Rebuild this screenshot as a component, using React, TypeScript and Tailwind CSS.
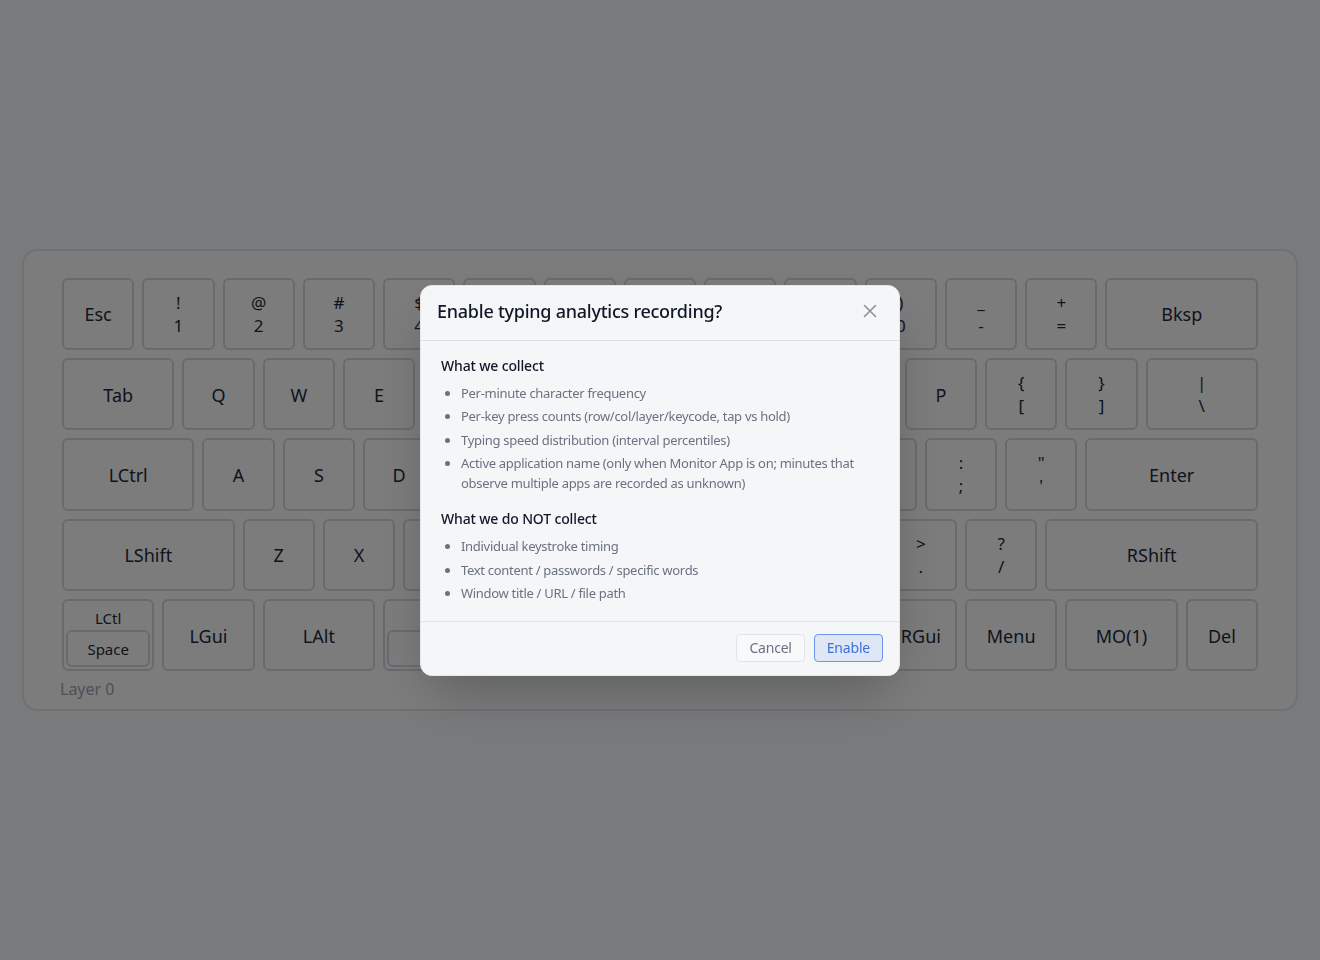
import React from 'react';

type Key = { u?: number; label?: string; top?: string; bottom?: string; hold?: string; tap?: string };

const PITCH = 80.27;
const GAP = 8;

const rows: Key[][] = [
  [
    { label: 'Esc' },
    { top: '!', bottom: '1' },
    { top: '@', bottom: '2' },
    { top: '#', bottom: '3' },
    { top: '$', bottom: '4' },
    { top: '%', bottom: '5' },
    { top: '^', bottom: '6' },
    { top: '&', bottom: '7' },
    { top: '*', bottom: '8' },
    { top: '(', bottom: '9' },
    { top: ')', bottom: '0' },
    { top: '_', bottom: '-' },
    { top: '+', bottom: '=' },
    { label: 'Bksp', u: 2 },
  ],
  [
    { label: 'Tab', u: 1.5 },
    ...'QWERTYUIOP'.split('').map((c) => ({ label: c })),
    { top: '{', bottom: '[' },
    { top: '}', bottom: ']' },
    { top: '|', bottom: '\\', u: 1.5 },
  ],
  [
    { label: 'LCtrl', u: 1.75 },
    ...'ASDFGHJKL'.split('').map((c) => ({ label: c })),
    { top: ':', bottom: ';' },
    { top: '"', bottom: "'" },
    { label: 'Enter', u: 2.25 },
  ],
  [
    { label: 'LShift', u: 2.25 },
    ...'ZXCVBNM'.split('').map((c) => ({ label: c })),
    { top: '<', bottom: ',' },
    { top: '>', bottom: '.' },
    { top: '?', bottom: '/' },
    { label: 'RShift', u: 2.75 },
  ],
  [
    { hold: 'LCtl', tap: 'Space', u: 1.25 },
    { label: 'LGui', u: 1.25 },
    { label: 'LAlt', u: 1.5 },
    { hold: 'MO(2)', tap: 'Space', u: 6.25 },
    { label: 'RGui' },
    { label: 'Menu', u: 1.25 },
    { label: 'MO(1)', u: 1.5 },
    { label: 'Del' },
  ],
];

function KeyCap({ k }: { k: Key }) {
  const width = (k.u ?? 1) * PITCH - GAP;
  if (k.hold) {
    return (
      <div
        style={{ width }}
        className="h-[72.27px] shrink-0 rounded-md border-2 border-[#d1d5db] flex flex-col items-center p-[2px]"
      >
        <div className="flex-1 flex items-center text-[15px] leading-5 text-gray-800 pt-[3px]">{k.hold}</div>
        <div className="w-full h-[37px] rounded-md border-2 border-[#d1d5db] flex items-center justify-center text-[15px] text-gray-800 pt-[1px]">
          {k.tap}
        </div>
      </div>
    );
  }
  return (
    <div
      style={{ width }}
      className="h-[72.27px] shrink-0 rounded-md border-2 border-[#d1d5db] flex flex-col items-center justify-center text-gray-800"
    >
      {k.label ? (
        <span className="text-lg leading-6 pt-[1px]">{k.label}</span>
      ) : (
        <>
          <span className="text-[17px] leading-[23px]">{k.top}</span>
          <span className="text-[17px] leading-[23px]">{k.bottom}</span>
        </>
      )}
    </div>
  );
}

const collect = [
  'Per-minute character frequency',
  'Per-key press counts (row/col/layer/keycode, tap vs hold)',
  'Typing speed distribution (interval percentiles)',
  'Active application name (only when Monitor App is on; minutes that observe multiple apps are recorded as unknown)',
];

const notCollect = [
  'Individual keystroke timing',
  'Text content / passwords / specific words',
  'Window title / URL / file path',
];

export default function App() {
  return (
    <div className="min-h-screen bg-[#f3f4f6] flex items-center justify-center px-[22px] font-['Noto_Sans',sans-serif]">
      <div className="w-full rounded-2xl border-2 border-[#dfe2e7] bg-[#f8f9fa] px-[38px] pt-[27px] pb-[8px]">
        <div className="flex flex-col gap-2">
          {rows.map((row, i) => (
            <div key={i} className="flex gap-2">
              {row.map((k, j) => (
                <KeyCap key={j} k={k} />
              ))}
            </div>
          ))}
        </div>
        <div className="mt-[6px] -ml-[2px] text-base leading-6 text-gray-400">Layer 0</div>
      </div>

      <div className="fixed inset-0 bg-black/50 flex items-center justify-center">
        <div className="w-[480px] rounded-xl border border-[#e4e6eb] bg-[#f5f6f8] shadow-2xl">
          <div className="flex items-center justify-between border-b border-[#dde0e8] pl-4 pr-[22px] pt-3 pb-[15px]">
            <h2 className="text-lg leading-[27px] font-medium tracking-[-0.25px] text-gray-900">
              Enable typing analytics recording?
            </h2>
            <button className="text-[#8a909c]">
              <svg width="14" height="14" viewBox="0 0 14 14" fill="none" stroke="currentColor" strokeWidth="1.6" strokeLinecap="round">
                <path d="M1.5 1.5l11 11M12.5 1.5l-11 11" />
              </svg>
            </button>
          </div>

          <div className="px-5 pt-[15px] pb-[17px]">
            <h3 className="text-sm leading-5 font-medium tracking-[-0.15px] text-gray-900">What we collect</h3>
            <ul className="mt-2 list-disc pl-5 space-y-1 text-[13px] leading-[19.5px] tracking-[-0.3px] text-gray-500">
              {collect.map((t) => (
                <li key={t}>{t}</li>
              ))}
            </ul>
            <h3 className="mt-4 text-sm leading-5 font-medium tracking-[-0.15px] text-gray-900">What we do NOT collect</h3>
            <ul className="mt-2 list-disc pl-5 space-y-1 text-[13px] leading-[19.5px] tracking-[-0.3px] text-gray-500">
              {notCollect.map((t) => (
                <li key={t}>{t}</li>
              ))}
            </ul>
          </div>

          <div className="flex justify-end gap-[9px] border-t border-[#e1e3e9] px-4 pt-3 pb-[13px]">
            <button className="h-7 px-3 rounded border border-[#e2e4e9] bg-[#f8f9fb] text-sm tracking-[-0.2px] text-gray-500">
              Cancel
            </button>
            <button className="h-7 px-3 rounded border border-[#6b95ee] bg-[#dfe7f7] text-sm tracking-[-0.2px] text-[#3d6fdc]">
              Enable
            </button>
          </div>
        </div>
      </div>
    </div>
  );
}
